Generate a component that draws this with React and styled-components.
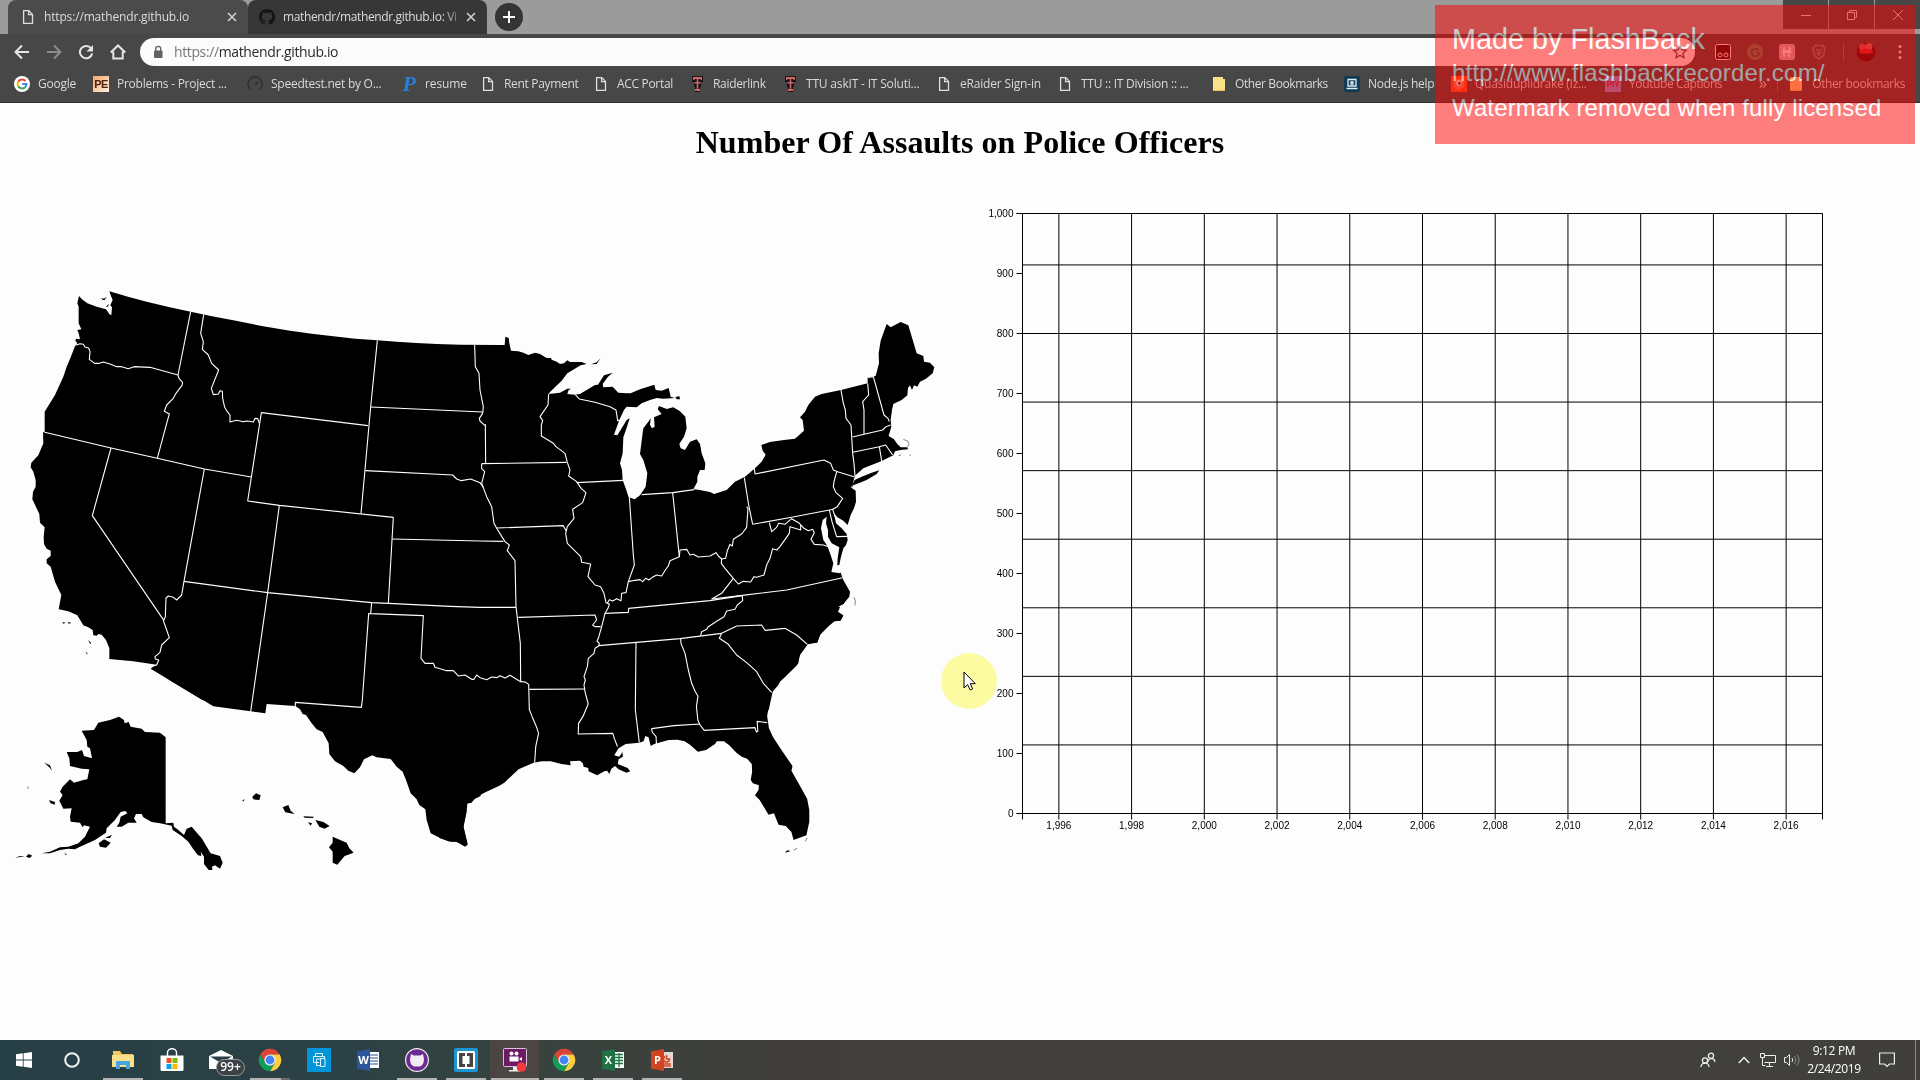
import React from "react";
import styled, { createGlobalStyle } from "styled-components";

const UI = '"Open Sans", "Noto Sans", sans-serif';
const ARIAL = '"Liberation Sans", Arial, sans-serif';

const Global = createGlobalStyle`
  * { box-sizing: border-box; }
  html, body { margin: 0; padding: 0; background: #fdfdfd; overflow: hidden; }
`;

const Screen = styled.div`
  position: relative;
  width: 1920px;
  height: 1080px;
  display: flex;
  flex-direction: column;
  overflow: hidden;
  font-family: ${UI};
`;

/* ---------- browser chrome ---------- */

const TabStrip = styled.div`
  height: 34px;
  flex: none;
  display: flex;
  align-items: flex-start;
  padding-left: 8px;
  background: #9b9b9b;
`;
const Tab = styled.div`
  width: ${(p) => p.$w}px;
  height: 34px;
  display: flex;
  align-items: center;
  padding: 0 11px 0 ${(p) => (p.$active ? 12 : 11)}px;
  border-radius: 8px 8px 0 0;
  background: ${(p) => (p.$active ? "#4b4b4b" : "#373737")};
  color: #dcdcdc;
`;
const TabTitle = styled.span`
  flex: 1;
  margin-left: ${(p) => p.$gap}px;
  overflow: hidden;
  white-space: nowrap;
  font-size: 12px;
  line-height: 18px;
  letter-spacing: ${(p) => p.$ls || 0}px;
  mask-image: ${(p) => (p.$fade ? "linear-gradient(90deg, #000 88%, transparent 99%)" : "none")};
`;
const NewTab = styled.div`
  width: 28px;
  height: 28px;
  margin: 3px 0 0 8px;
  border-radius: 50%;
  background: #343434;
  display: grid;
  place-items: center;
`;
const WindowButtons = styled.div`
  margin-left: auto;
  display: flex;
  gap: 1px;
`;
const WindowButton = styled.div`
  width: 45px;
  height: 29px;
  background: #474747;
  display: grid;
  place-items: center;
`;
const Toolbar = styled.div`
  height: 36px;
  flex: none;
  display: flex;
  align-items: center;
  background: #474747;
  padding: 0 12px 0 14px;
`;
const NavIcons = styled.div`
  display: flex;
  gap: 16px;
  margin-right: 14px;
`;
const AddressBar = styled.div`
  width: 1559px;
  height: 28px;
  display: flex;
  align-items: center;
  border-radius: 14px;
  background: #fbfbfb;
  padding: 0 7px 0 11px;
`;
const Url = styled.span`
  flex: 1;
  margin-left: 9px;
  font-size: 14px;
  line-height: 20px;
  letter-spacing: -0.38px;
  color: #2a2a2a;
  em { font-style: normal; color: #777; }
`;
const Extensions = styled.div`
  display: flex;
  align-items: center;
  gap: 16px;
  margin-left: 20px;
`;
const Divider = styled.span`
  width: 1px;
  height: 16px;
  margin-right: ${(p) => p.$pull || 0}px;
  background: #777;
`;
const Bookmarks = styled.div`
  height: 33px;
  flex: none;
  display: flex;
  align-items: center;
  padding: 0 15px 4px 14px;
  background: #474747;
  border-bottom: 1px solid #303030;
`;
const Bookmark = styled.div`
  width: ${(p) => (p.$w ? `${p.$w}px` : "auto")};
  flex: none;
  display: flex;
  align-items: center;
  gap: 8px;
  white-space: nowrap;
  font-size: 12px;
  line-height: 18px;
  letter-spacing: ${(p) => p.$ls}px;
  color: #dadada;
`;
const Overflow = styled.div`
  margin-left: auto;
  display: flex;
  align-items: center;
  color: #dadada;
  gap: 10px;
  font-size: 17px;
  line-height: 18px;
`;
const Chevrons = styled.span`
  padding-bottom: 3px;
`;
const Badge = styled.span`
  width: 16px;
  height: 16px;
  display: grid;
  place-items: center;
  flex: none;
  border-radius: ${(p) => p.$r || 0};
  background: ${(p) => p.$bg};
  color: ${(p) => p.$fg || "#fff"};
  font: ${(p) => p.$font || `bold 9px ${ARIAL}`};
  letter-spacing: -0.5px;
`;

/* ---------- page ---------- */

const Page = styled.main`
  flex: 1;
  background: #fdfdfd;
`;
const Title = styled.h1`
  margin: 0;
  padding-top: 21px;
  height: 87px;
  text-align: center;
  font: bold 32px/37px "Liberation Serif", "Times New Roman", serif;
  letter-spacing: 0.06px;
  color: #000;
`;
const Panels = styled.div`
  display: grid;
  grid-template-columns: 960px 960px;
  height: 810px;
`;
const Plot = styled.svg`
  display: block;
  width: 960px;
  height: 810px;
  overflow: visible;
`;
const Land = styled.path`
  fill: #000;
`;
const Border = styled.path`
  fill: none;
  stroke: #fff;
  stroke-width: 1.1;
  vector-effect: non-scaling-stroke;
  stroke-linejoin: round;
`;
const Coast = styled(Border)`
  stroke: #777;
  stroke-width: 0.9;
`;
const AxisText = styled.text`
  font: 10px ${ARIAL};
  fill: #000;
`;

/* ---------- overlays ---------- */

const Watermark = styled.div`
  position: absolute;
  left: 1435px;
  top: 5px;
  width: 480px;
  height: 139px;
  padding: 15px 17px;
  background: #f00;
  color: #fff;
  opacity: 0.5;
  font-family: ${ARIAL};
  white-space: nowrap;
`;
const MarkLine = styled.div`
  padding-top: ${(p) => p.$drop || 0}px;
  height: 35px;
  font-size: ${(p) => p.$size}px;
  letter-spacing: ${(p) => p.$ls || 0}px;
  line-height: 35px;
`;
const Pointer = styled.svg`
  position: absolute;
  left: 940px;
  top: 652px;
  width: 58px;
  height: 58px;
  mix-blend-mode: multiply;
`;
const Arrow = styled.svg`
  position: absolute;
  left: 963px;
  top: 671px;
  width: 14px;
  height: 22px;
`;

/* ---------- taskbar ---------- */

const Taskbar = styled.div`
  height: 40px;
  flex: none;
  display: flex;
  background: linear-gradient(90deg, #263f45 0, #2c4145 350px, #37433f 520px, #403f3b 760px, #42413c 1300px, #403f3c 100%);
`;
const Task = styled.div`
  width: ${(p) => p.$w || 49}px;
  height: 40px;
  display: grid;
  place-items: center;
  background: ${(p) => (p.$focus ? "#4b4643" : "none")};
  position: relative;
  &::after {
    content: "";
    display: ${(p) => (p.$open ? "block" : "none")};
    position: absolute;
    bottom: 0;
    left: ${(p) => (p.$focus ? 1 : 5)}px;
    right: ${(p) => (p.$focus ? 0 : 4)}px;
    height: 2px;
    background: ${(p) => (p.$stack ? "linear-gradient(90deg,#b4b4b4 31px,#6c6c6c 31px)" : "#b4b4b4")};
  }
`;
const Count = styled.span`
  position: absolute;
  left: 20px;
  top: 19px;
  width: 29px;
  height: 17px;
  border: 1px solid #999;
  border-radius: 9px;
  background: #3a4245;
  color: #fff;
  font-size: 12px;
  font-weight: 600;
  line-height: 14px;
  text-align: center;
`;
const Tray = styled.div`
  margin-left: auto;
  display: flex;
  align-items: center;
  padding-right: 4px;
`;
const TrayItem = styled.div`
  width: ${(p) => p.$w}px;
  display: grid;
  place-items: center;
`;
const Clock = styled.div`
  width: 62px;
  text-align: center;
  color: #fff;
  font-size: 12px;
  line-height: 18px;
  letter-spacing: -0.35px;
  white-space: nowrap;
`;
const ShowDesktop = styled.div`
  width: 1px;
  height: 40px;
  margin-left: 6px;
  background: #8a8a86;
`;

/* ---------- icons ---------- */

const FileIcon = () => (
  <svg width="16" height="16" viewBox="0 0 16 16" fill="none" stroke="#dedede" strokeWidth="1.3">
    <path d="M3.6 1.6h5.2l3.7 3.8v9H3.6zM8.6 1.6v4h3.9" />
  </svg>
);
const CloseIcon = ({ c = "#cfcfcf" }) => (
  <svg width="10" height="10" viewBox="0 0 10 10" stroke={c} strokeWidth="1.6">
    <path d="M1 1l8 8M9 1l-8 8" />
  </svg>
);
const Octocat = ({ size = 16, color = "#151515" }) => (
  <svg width={size} height={size} viewBox="0 0 16 16" fill={color}>
    <path d="M8 0C3.58 0 0 3.58 0 8c0 3.54 2.29 6.53 5.47 7.59.4.07.55-.17.55-.38 0-.19-.01-.82-.01-1.49-2.01.37-2.53-.49-2.69-.94-.09-.23-.48-.94-.82-1.13-.28-.15-.68-.52-.01-.53.63-.01 1.08.58 1.23.82.72 1.21 1.87.87 2.33.66.07-.52.28-.87.51-1.07-1.78-.2-3.64-.89-3.64-3.95 0-.87.31-1.59.82-2.15-.08-.2-.36-1.02.08-2.12 0 0 .67-.21 2.2.82a7.6 7.6 0 0 1 4 0c1.53-1.04 2.2-.82 2.2-.82.44 1.1.16 1.92.08 2.12.51.56.82 1.27.82 2.15 0 3.07-1.87 3.75-3.65 3.95.29.25.54.73.54 1.48 0 1.07-.01 1.93-.01 2.2 0 .21.15.46.55.38A8 8 0 0 0 16 8c0-4.42-3.58-8-8-8z" />
  </svg>
);
const GoogleIcon = () => (
  <svg width="16" height="16" viewBox="0 0 16 16" fill="none" strokeWidth="2">
    <circle cx="8" cy="8" r="8" fill="#fff" />
    <path d="M11.4 5A4.5 4.5 0 0 0 4.3 5.6" stroke="#ea4335" />
    <path d="M4.3 5.6a4.5 4.5 0 0 0 0 4.8" stroke="#fbbc05" />
    <path d="M4.3 10.4a4.5 4.5 0 0 0 6.6 1" stroke="#34a853" />
    <path d="M10.9 11.4A4.4 4.4 0 0 0 12.4 8H8.2" stroke="#4285f4" />
  </svg>
);
const GaugeIcon = () => (
  <svg width="16" height="16" viewBox="0 0 16 16" fill="none" stroke="#2f3133" strokeWidth="1.6">
    <path d="M3.4 13.2a7 7 0 1 1 9.2 0M8 9.5l3-4" />
  </svg>
);
const FolderIcon = () => (
  <svg width="16" height="16" viewBox="0 0 16 16">
    <path d="M2 1h10v2h2v12H2z" fill="#fbe08a" />
    <path d="M2 14h10l2-2v3H2z" fill="#f0c75e" />
  </svg>
);
const DoubleTIcon = () => (
  <svg width="16" height="16" viewBox="0 0 16 16">
    <path d="M3 0h11v6h-2v5h-1v5H6v-5H5V6H3z" fill="#1c1516" />
    <path d="M4 1h9v3h-1.500V3H9.300v10H11v2H6v-2h1.700V3H5.500v1H4zM5.500 6h6v1.500h-6z" fill="#c9686a" />
  </svg>
);
const LaptopIcon = () => (
  <svg width="16" height="16" viewBox="0 0 16 16">
    <rect width="16" height="16" rx="2" fill="#123a52" />
    <path d="M4 3.500h8v6.500H4zM2.500 12.500h11M7 6h2v2H7z" fill="none" stroke="#d8eef8" strokeWidth="1.3" />
  </svg>
);
const PortraitIcon = () => (
  <svg width="16" height="16" viewBox="0 0 16 16">
    <rect width="16" height="16" fill="#ff5a1e" />
    <circle cx="8" cy="8" r="5.500" fill="#e88a60" />
    <circle cx="8" cy="7" r="3" fill="#f4e8dc" />
    <circle cx="8.500" cy="7.300" r="1.400" fill="#402040" />
  </svg>
);
const ChromeIcon = () => (
  <svg width="24" height="24" viewBox="0 0 24 24">
    <path d="M2.300 6.400A11.200 11.200 0 0 1 21.700 6.400L12 6.400L7.100 14.800Z" fill="#db4437" />
    <path d="M21.700 6.400A11.200 11.200 0 0 1 12 23.200L16.900 14.800L12 6.400Z" fill="#ffcd40" />
    <path d="M12 23.200A11.200 11.200 0 0 1 2.300 6.400L7.100 14.800L16.900 14.800Z" fill="#0f9d58" />
    <circle cx="12" cy="12" r="5.600" fill="#f1f1f1" />
    <circle cx="12" cy="12" r="4.400" fill="#4285f4" />
  </svg>
);
const OfficeIcon = ({ color, letter, kind }) => (
  <svg width="24" height="24" viewBox="0 0 24 24">
    <rect x="12" y="4" width="11" height="16" fill={kind === "ppt" ? "#e8d8d2" : "#fff"} />
    {kind === "doc" && <path d="M14 7h8M14 10h8M14 13h8M14 16h8" stroke={color} strokeWidth="1.200" />}
    {kind === "xls" && <path d="M14 6.500h8M14 9.500h8M14 12.500h8M14 15.500h8M18 5v14" stroke={color} strokeWidth="1.300" />}
    {kind === "ppt" && <path d="M14 16h7M14 18h7M15 8.500a3 3 0 1 0 4.500 2.500h-3V7" fill="none" stroke={color} strokeWidth="1.500" />}
    <path d="M1 3.200L14 1v22L1 20.800z" fill={color} />
    <text x="7.500" y="16" textAnchor="middle" fontFamily="Open Sans" fontWeight="700" fontSize="11" fill="#fff">{letter}</text>
  </svg>
);

/* ---------- map geometry: each sheet has its own origin and scale ---------- */

const SHEETS = {
  west: "translate(0 80) scale(.33333)",
  east: "translate(480 120) scale(.33333)",
  southwest: "translate(0 490) scale(.33333)",
  gulf: "translate(440 410) scale(.35714 .33333)",
};

const LAND = {
  west: [
    "237,78 246,88 262,100 290,110 318,118 328,132 334,136 336,112 331,106 338,90 333,78 328,64 384,80 440,95 506,111 572,125 636,139 700,151 785,168 870,182 935,191 1000,199 1066,206 1132,211 1190,215 1250,219 1310,222 1380,224 1500,225 1500,1290 607,1290 452,1196 462,1188 470,1184 400,1174 328,1167 328,1135 318,1110 305,1094 295,1092 290,1097 280,1096 278,1080 265,1072 250,1066 232,1036 205,1024 176,1018 184,975 165,935 152,890 140,880 140,868 152,858 152,842 140,836 132,822 131,800 134,772 120,758 118,732 97,688 99,665 107,650 107,630 100,605 92,592 94,578 115,556 130,520 129,487 134,487 134,425 165,375 190,320 200,290 212,262 226,226 232,220 226,212 228,206 240,208 236,190 232,180 244,178 236,160 236,110 232,100",
    "304,84 312,86 320,80 314,90 308,90", "318,110 326,102 324,110",
    "187,1056 197,1058 190,1061", "203,1055 214,1059 206,1061", "264,1110 273,1118 271,1123", "257,1144 263,1152 260,1153",
  ],
  east: [
    "0,105 74,105 76,80 86,84 88,100 93,122 115,124 130,128 145,135 165,128 180,132 200,144 213,144 215,149 230,155 240,162 252,160 262,151 270,156 305,156 320,162 302,166 262,190 245,212 210,246 206,252 240,248 262,236 274,236 266,240 262,252 284,254 300,252 345,225 354,224 372,196 398,188 384,200 368,222 370,232 398,230 415,248 440,250 452,250 480,238 523,224 527,240 545,242 566,234 572,260 584,264 550,266 530,264 510,270 485,280 470,292 440,290 432,300 418,330 402,374 412,376 440,330 449,325 441,350 430,382 428,430 420,460 426,480 428,510 437,535 446,562 464,568 480,556 497,530 502,490 490,450 480,432 486,385 490,355 505,335 512,325 510,345 516,355 524,350 522,322 545,312 533,298 537,288 560,297 580,292 600,304 616,320 620,355 612,380 598,402 602,415 615,420 630,395 650,388 660,402 665,430 676,460 674,480 660,480 652,500 652,515 640,538 655,539 690,546 702,552 740,540 765,515 795,500 825,475 845,455 857,434 848,422 844,405 870,396 912,390 945,386 972,362 968,330 960,322 975,305 985,285 1005,260 1025,252 1083,240 1163,220 1163,202 1187,198 1197,160 1196,130 1202,92 1220,42 1232,52 1262,36 1285,46 1310,130 1330,138 1332,155 1350,158 1363,172 1358,190 1338,206 1320,215 1312,230 1302,226 1296,240 1290,226 1284,234 1282,256 1265,270 1240,282 1236,300 1232,330 1234,350 1226,378 1242,388 1252,402 1262,412 1282,412 1284,418 1262,420 1245,424 1240,436 1205,453 1150,475 1124,498 1118,524 1112,532 1127,542 1128,575 1122,595 1112,615 1103,645 1090,632 1072,622 1062,610 1068,640 1085,655 1100,672 1103,690 1098,705 1090,715 1082,745 1078,765 1072,765 1074,786 1082,788 1090,810 1110,845 1108,860 1090,882 1070,886 1080,892 1074,905 1090,916 1082,932 1060,934 1020,975 1012,998 980,1002 960,1030 955,1060 930,1085 900,1115 895,1125 878,1145 866,1200 0,1200",
    "1124,510 1145,500 1175,488 1198,481 1190,492 1160,510 1120,526 1112,536",
    "333,163 350,157 362,145 350,162", "586,262 598,258 600,268 590,268",
    "1256,437 1264,432 1258,439",
  ],
  southwest: [
    "505,-2 640,79 796,100 800,72 886,78 900,88 908,102 918,105 935,130 950,148 968,156 986,190 988,222 1005,244 1030,258 1045,272 1063,280 1080,262 1092,238 1117,226 1130,232 1172,237 1190,260 1208,275 1218,300 1232,340 1250,358 1258,375 1276,388 1280,420 1292,460 1310,469 1345,484 1370,486 1398,498 1403,492 1390,440 1400,395 1398,372 1412,368 1425,356 1442,348 1442,-2",
    "357,110 372,120 374,130 386,126 392,140 425,146 435,156 480,158 497,172 497,430 520,428 522,440 535,450 552,465 560,446 575,440 588,455 605,475 632,520 660,528 668,548 660,566 645,556 636,560 637,570 626,570 612,552 612,530 602,515 604,528 594,526 580,508 565,485 545,468 518,450 515,437 480,430 455,426 430,412 425,402 408,402 402,415 410,428 385,428 365,440 350,440 358,428 362,410 382,400 376,393 362,396 345,420 320,445 318,458 285,480 240,500 225,508 205,506 180,510 150,520 125,520 150,515 180,502 205,500 235,490 255,470 270,440 252,436 248,442 240,428 212,425 210,410 215,385 190,386 178,362 188,345 180,335 188,320 210,298 222,308 250,300 262,298 268,268 245,266 210,258 208,235 200,216 232,216 246,210 252,228 276,235 270,205 262,200 260,180 245,152 282,150 295,128 330,120",
    "133,248 150,256 156,272 148,262", "147,360 165,366 164,374 152,370", "296,490 312,478 332,488 318,503 300,500", "315,474 336,464 330,474",
    "45,534 60,528 75,530 60,531", "78,530 86,522 97,527 88,534", "193,520 200,522 198,526", "82,318 86,325 84,326",
    "757,350 768,340 782,346 778,360 760,358", "726,363 734,357 731,364", "848,382 865,375 872,392 884,402 856,397", "910,409 942,410 938,414 914,413", "924,427 936,430 932,437", "946,420 970,426 989,438 974,446 958,440", "998,470 1040,488 1048,505 1061,518 1034,528 1012,554 998,548 998,515 987,502 998,488",
  ],
  gulf: [
    "-2,0 -2,714 30,725 45,724 70,740 77,734 66,680 76,620 76,610 88,608 100,592 130,575 165,558 180,548 220,508 262,488 285,484 310,484 340,492 366,496 364,484 392,482 400,490 402,500 415,504 416,514 440,526 460,514 468,512 474,522 480,506 490,498 500,508 522,518 533,514 525,504 498,492 500,478 512,470 511,456 502,470 488,466 500,445 520,432 558,428 570,424 575,408 584,412 590,438 600,432 640,420 665,419 685,424 700,434 722,455 745,450 770,432 775,424 795,424 810,436 830,458 845,470 860,476 873,492 874,515 870,540 876,550 893,556 892,570 882,586 895,600 920,644 935,640 948,674 968,678 984,696 990,720 1026,706 1034,665 1034,630 1028,596 1005,552 984,512 987,498 972,475 950,440 932,410 921,385 916,348 924,300 932,270 950,245 965,232 1000,195 1008,165 1030,133 1056,126 1066,100 1085,80 1105,64 1122,60 1128,48 1112,45 1115,20 1130,12 1136,-4 1100,-4",
    "966,758 972,751 982,753",
  ],
};

const WATER = {
  east: ["1040,620 1028,630 1023,655 1030,690 1042,708 1052,735 1060,760 1054,786 1080,790 1072,765 1073,745 1078,712 1055,700 1044,680 1044,660 1038,640"],
  gulf: ["368,486 384,485 378,490", "876,556 890,560 878,580"],
};

const BORDERS = {
  west: [
    "572,125 534,315", "226,226 240,221 250,223 255,231 266,234 270,245 268,268 284,280 298,280 310,276 330,282 350,290 365,290 385,296 402,290 450,292 534,315",
    "534,315 537,325 548,338 546,346 528,370 520,385 500,405 493,424 508,432 500,460 472,565", "134,487 333,534 472,565 613,597 754,621",
    "611,133 602,190 610,215 607,238 625,255 635,280 656,300 634,355 640,374 655,372 660,362 667,364 668,385 674,412 682,425 690,435 690,456 710,451 730,455 742,453 760,456 765,445 773,446 778,460",
    "743,693 784,428 1104,467", "743,693 838,706 1180,742", "1132,211 1112,411 1083,731", "333,534 277,737 492,1052",
    "613,597 552,934 545,975 530,990 520,982 505,978 498,984 496,1040 490,1052", "490,1052 500,1080 508,1103 485,1125 480,1147 465,1160 466,1167 476,1170 470,1185 452,1190",
    "838,706 803,968 757,1290", "552,934 803,968 1115,998 1165,1000 1350,1009 1440,1012", "1180,742 1165,1000", "1177,807 1440,813", "1112,411 1448,426",
    "1424,225 1426,290 1437,310 1440,360 1450,410 1448,430 1438,445 1440,453 1455,467", "1096,602 1358,615 1370,627 1384,632 1412,627 1440,638 1450,652",
    "1115,998 1112,1031 1270,1037 1263,1165 1275,1180 1300,1180 1305,1192 1340,1202 1360,1202 1375,1218 1395,1215 1415,1228 1422,1228 1430,1215 1440,1223", "1112,1031 1106,1031 1087,1290",
  ],
  southwest: ["757,60 752,95", "1087,60 1084,82 886,67 886,80"],
  east: [
    "16,342 17,460", "5,461 260,457",
    "5,461 5,476 14,485 5,520 20,560 35,590 42,640 50,655 75,695 88,705 82,722 105,752 108,890 115,950 121,1000 122,1115",
    "50,654 250,647 258,662", "0,693 70,694", "0,892 108,892", "206,252 204,285 180,320 188,332 184,345 184,378 220,400 228,410 255,430 262,457",
    "262,457 270,480 266,498 290,515 304,536 318,548 308,578 278,598 282,625 262,650 257,670 262,700 302,740 305,757 332,762 324,800 345,825 362,830 372,850 378,878 388,882 384,895 375,910 365,950 355,985 351,993 358,1000 356,1008",
    "290,518 430,511", "286,254 298,267 345,277 390,290 408,300 413,332 425,330", "448,562 460,735 463,765 445,815 438,848 425,850 423,872 410,866 398,873 388,869 382,880",
    "485,554 578,548 642,539", "578,548 598,740",
    "445,815 465,811 480,809 488,815 497,805 507,810 517,802 530,795 545,798 556,780 565,768 570,752 598,740 600,720 620,718 630,735 640,733 655,741 690,738 708,728 715,738 725,747 737,745 742,722 750,703 757,708 760,688 785,672 800,652 804,595 800,590",
    "793,503 806,585 818,643", "818,643 935,622 1060,598", "823,475 825,492 1032,450 1052,460 1060,480 1075,486 1122,500",
    "1070,486 1062,515 1060,530 1068,548 1088,565 1072,590 1058,598 1065,620", "1048,600 1056,635 1070,680 1102,679",
    "868,638 875,665 890,652 896,640 915,643 935,626 958,640 972,655 985,662 998,658 1003,668 993,688 1003,703 1030,705 1045,710",
    "962,645 962,660 930,650 928,670 900,710 890,720 878,716 870,745 860,765 852,795 830,802 822,800 812,816 790,814 775,822 760,805", "725,745 724,760 735,775 760,805",
    "760,805 725,850 695,867", "695,867 787,856 920,840 1088,803", "375,910 445,907 446,895 690,872 787,857",
    "787,857 788,872 772,885 765,898 740,903 732,920 710,934 685,950 680,958 665,965 662,977", "356,1007 600,986 725,970", "725,970 770,948 845,945 855,961 915,955 950,975 982,1003",
    "725,970 718,985 745,1003 750,1010 770,1035 800,1058 830,1085 850,1120 875,1147", "468,998 466,1200", "602,986 603,1000 615,1030 625,1080 635,1120 646,1145 655,1160",
    "115,922 345,915 350,930 338,945 345,950 362,950", "356,1008 345,1015 342,1030 325,1045 322,1070 312,1100 316,1110 312,1125 314,1137", "148,1138 314,1137",
    "0,1103 20,1109 35,1101 50,1103 60,1097 75,1104 90,1096 122,1115 136,1116 146,1123 148,1200",
    "1083,240 1090,280 1096,300 1098,325 1113,345 1118,430 1122,460 1125,498", "1163,220 1166,255 1148,275 1152,300 1152,373", "1163,202 1180,200 1212,315 1224,325 1228,335",
    "1118,381 1152,373 1208,360 1218,350 1232,345", "1118,427 1198,410 1217,405 1238,435", "1198,410 1205,453",
  ],
  gulf: [
    "405,267 406,275 415,312 400,350 388,370 387,402 484,400 488,415 497,440", "250,328 258,350 270,380 276,400 268,440 265,488",
    "547,330 558,428", "722,290 718,320 722,360 728,375", "728,372 655,377 593,386 594,396 605,410 606,432", "728,375 740,391 882,383 886,396 890,394 888,364 916,368",
  ],
};

const COASTS = {
  east: ["1280,412 1287,404 1284,394 1270,388", "1122,862 1126,872 1125,886", "1288,436 1293,435"],
  gulf: ["990,750 1000,745", "1022,724 1028,714"],
};

const toPath = (points, closed) => "M" + points.split(" ").join("L") + (closed ? "Z" : "");

const UsMap = () => (
  <Plot viewBox="0 0 960 810">
    {Object.keys(SHEETS).map((k) => (
      <g key={k} transform={SHEETS[k]}>
        {LAND[k].map((d) => <Land key={d} d={toPath(d, true)} />)}
      </g>
    ))}
    {Object.keys(SHEETS).map((k) => (
      <g key={k} transform={SHEETS[k]}>
        {(WATER[k] || []).map((d) => <path key={d} d={toPath(d, true)} fill="#fdfdfd" />)}
        {BORDERS[k].map((d) => <Border key={d} d={toPath(d)} />)}
        {(COASTS[k] || []).map((d) => <Coast key={d} d={toPath(d)} />)}
      </g>
    ))}
  </Plot>
);

const CHART = { left: 62.5, top: 23.5, width: 800, height: 600 };
const YEARS = Array.from({ length: 11 }, (_, i) => 1996 + i * 2);
const COUNTS = Array.from({ length: 11 }, (_, i) => i * 100);

const Chart = () => {
  const { left, top, width, height } = CHART;
  const right = left + width;
  const bottom = top + height;
  const x = (year) => left + ((year - 1995) / 22) * width;
  const y = (n) => bottom - (n / 1000) * height;
  return (
    <Plot viewBox="0 0 960 810">
      <g stroke="#000" fill="none">
        <path d={`M${left - 6} ${top}H${right}V${bottom + 6}M${left - 6} ${bottom}H${right}M${left} ${top}V${bottom + 6}`} />
        {YEARS.map((v) => <path key={v} d={`M${x(v)} ${top}V${bottom + 6}`} />)}
        {COUNTS.map((v) => <path key={v} d={`M${left - 6} ${Math.floor(y(v)) + 0.5}H${left}`} />)}
        {[1, 2, 3, 4, 5, 6, 7, 8].map((k) => <path key={k} d={`M${left} ${bottom - (k * height) / 8.75}H${right}`} />)}
      </g>
      {YEARS.map((v) => <AxisText key={v} x={x(v)} y={bottom + 15.6} textAnchor="middle">{v.toLocaleString("en-US")}</AxisText>)}
      {COUNTS.map((v) => <AxisText key={v} x={left - 9} y={y(v) + 3.2} textAnchor="end">{v.toLocaleString("en-US")}</AxisText>)}
    </Plot>
  );
};

const BOOKMARKS = [
  { w: 79, label: "Google", icon: <GoogleIcon /> },
  { w: 154, label: "Problems - Project ...", icon: <Badge $bg="linear-gradient(135deg,#f3a86a,#fff0e0)" $fg="#4a2410" $font={`bold 11px ${ARIAL}`}>PE</Badge> },
  { w: 154, label: "Speedtest.net by O...", icon: <GaugeIcon /> },
  { w: 79, label: "resume", icon: <Badge $bg="none" $fg="#2680dc" $font='italic bold 22px/16px "Liberation Serif", serif'>P</Badge>, ls: -0.1 },
  { w: 113, label: "Rent Payment", icon: <FileIcon />, ls: -0.32 },
  { w: 96, label: "ACC Portal", icon: <FileIcon />, ls: -0.32 },
  { w: 93, label: "Raiderlink", icon: <DoubleTIcon />, ls: -0.32 },
  { w: 154, label: "TTU askIT - IT Soluti...", icon: <DoubleTIcon />, ls: -0.18 },
  { w: 121, label: "eRaider Sign-in", icon: <FileIcon />, ls: -0.18 },
  { w: 154, label: "TTU :: IT Division :: ...", icon: <FileIcon /> },
  { w: 133, label: "Other Bookmarks", icon: <FolderIcon />, ls: -0.4 },
  { w: 107, label: "Node.js help", icon: <LaptopIcon />, ls: -0.3 },
  { w: 154, label: "Quasiduplidrake (Iz...", icon: <PortraitIcon /> },
  { w: 118, label: "Youtube Captions", icon: <Badge $bg="#7a9ad8" $fg="#c01840">PIY</Badge>, ls: -0.38 },
];

const Browser = () => (
  <>
    <TabStrip>
      <Tab $w={240} $active>
        <FileIcon />
        <TabTitle $gap={8} $ls={-0.16}>https://mathendr.github.io</TabTitle>
        <CloseIcon />
      </Tab>
      <Tab $w={239}>
        <Octocat />
        <TabTitle $gap={8} $ls={-0.36} $fade>mathendr/mathendr.github.io: Vi</TabTitle>
        <CloseIcon />
      </Tab>
      <NewTab>
        <svg width="12" height="12" stroke="#fff" strokeWidth="2"><path d="M6 0v12M0 6h12" /></svg>
      </NewTab>
      <WindowButtons>
        <WindowButton><svg width="10" height="10" stroke="#ddd"><path d="M0 5.500h10" /></svg></WindowButton>
        <WindowButton><svg width="10" height="10" stroke="#ddd" fill="none"><path d="M.5 2.500h7v7h-7zM2.500 2.500v-2h7v7h-2" /></svg></WindowButton>
        <WindowButton><svg width="10" height="10" stroke="#ddd"><path d="M0 0l10 10M10 0L0 10" /></svg></WindowButton>
      </WindowButtons>
    </TabStrip>
    <Toolbar>
      <NavIcons>
        <svg width="16" height="16" fill="none" stroke="#e6e6e6" strokeWidth="2"><path d="M15 8H2M8 1.500L1.500 8L8 14.500" /></svg>
        <svg width="16" height="16" fill="none" stroke="#8c8c8c" strokeWidth="2"><path d="M1 8h13M8 1.500L14.500 8L8 14.500" /></svg>
        <svg width="16" height="16" fill="none" stroke="#e6e6e6" strokeWidth="2"><path d="M13.200 4.500A6.200 6.200 0 1 0 14.200 9.500" /><path d="M15 1v6.500H8.500z" fill="#e6e6e6" stroke="none" /></svg>
        <svg width="16" height="16" fill="none" stroke="#e6e6e6" strokeWidth="2"><path d="M0.800 8.500L8 1.500L15.200 8.500M3.300 7.500v7h9.400v-7" /></svg>
      </NavIcons>
      <AddressBar>
        <svg width="14" height="14" viewBox="0 0 14 14"><rect x="3" y="5.500" width="8.500" height="7.500" rx="1" fill="#5f6368" /><path d="M4.800 6V3.800a2.450 2.450 0 0 1 4.900 0V6" fill="none" stroke="#5f6368" strokeWidth="1.400" /></svg>
        <Url><em>https://</em>mathendr.github.io</Url>
        <svg width="16" height="16" viewBox="0 0 16 16" fill="none" stroke="#555" strokeWidth="1.400"><path d="M8 1.800l1.900 4 4.400.5-3.300 3 .9 4.300L8 11.400l-3.900 2.200.9-4.300-3.300-3 4.400-.5z" /></svg>
      </AddressBar>
      <Extensions>
        <svg width="16" height="16" fill="#2b0f0f" stroke="#f4f4f4"><rect x=".5" y=".5" width="15" height="15" rx="2" /><circle cx="5" cy="11" r="2" /><circle cx="11" cy="11" r="2" /></svg>
        <Badge $bg="#5f7f5f" $fg="#33503c" $r="50%" $font={`bold 13px ${ARIAL}`}>G</Badge>
        <svg width="16" height="16"><rect width="16" height="16" rx="3" fill="#c9b0b0" /><path d="M5 3v10M11 3v3L5 8M10 8v5M3 8h10" stroke="#fff" strokeWidth="1.600" fill="none" /></svg>
        <svg width="16" height="16" fill="none" stroke="#85787a" strokeWidth="1.500"><path d="M4 1.500h8l2 3-1.500 7L8 15l-4.500-3.500L2 4.500zM5 5l3 2 3-2M6 8l2 3 2-3" /></svg>
        <Divider $pull={-4} />
        <svg width="20" height="20"><circle cx="10" cy="10" r="9.500" fill="#3d0f10" /><circle cx="6.500" cy="5" r="3.500" fill="#b9595c" /><circle cx="13" cy="4.500" r="3.500" fill="#c9696c" /><path d="M2 9.500q8-6 16 0l-3 2H5z" fill="#c02c30" /></svg>
        <svg width="16" height="16" fill="#e6e6e6"><circle cx="8" cy="2.500" r="1.600" /><circle cx="8" cy="8" r="1.600" /><circle cx="8" cy="13.500" r="1.600" /></svg>
      </Extensions>
    </Toolbar>
    <Bookmarks>
      {BOOKMARKS.map((b) => (
        <Bookmark key={b.label} $w={b.w} $ls={b.ls ?? -0.25}>{b.icon}<span>{b.label}</span></Bookmark>
      ))}
      <Overflow>
        <Chevrons>»</Chevrons>
        <Divider />
        <Bookmark $ls={-0.38}><FolderIcon /><span>Other bookmarks</span></Bookmark>
      </Overflow>
    </Bookmarks>
  </>
);

const Bar = () => (
  <Taskbar>
    <Task $w={48}><svg width="16" height="16" fill="#fff"><path d="M0 2.300l6.800-1v6.300H0zM7.600 1.200L16 0v7.600H7.600zM0 8.400h6.800v6.300L0 13.700zM7.600 8.400H16V16l-8.400-1.200z" /></svg></Task>
    <Task $w={50}><svg width="18" height="16"><circle cx="8" cy="8" r="6.800" fill="none" stroke="#f4f4f4" strokeWidth="2" /></svg></Task>
    <Task $open>
      <svg width="22" height="18"><path d="M1 0h7l2 3h11v13H1z" fill="#f2c75c" /><path d="M0 4h22v12H0z" fill="#fbe08c" /><path d="M4 10h14v8h-4v-4H8v4H4z" fill="#45a6e4" /></svg>
    </Task>
    <Task>
      <svg width="24" height="24"><path d="M0.500 7.500h23v14a1.500 1.500 0 0 1-1.500 1.500H2a1.500 1.500 0 0 1-1.500-1.500z" fill="#fff" /><path d="M7.500 8V4.500a4.500 3.700 0 0 1 9 0V8" fill="none" stroke="#fff" strokeWidth="1.400" /><path d="M6.500 10h5v5h-5z" fill="#f25022" /><path d="M12.500 10h5v5h-5z" fill="#7fba00" /><path d="M6.500 16h5v5h-5z" fill="#00a4ef" /><path d="M12.500 16h5v5h-5z" fill="#ffb900" /></svg>
    </Task>
    <Task>
      <svg width="24" height="20"><path d="M0 6L12 0l12 6v13H0z" fill="#fff" /><path d="M1 6.500h22L12 13z" fill="#263f45" /></svg>
      <Count>99+</Count>
    </Task>
    <Task $open $stack><ChromeIcon /></Task>
    <Task>
      <svg width="24" height="24" fill="none" stroke="#e4f4fc"><rect width="24" height="24" fill="#0095d9" stroke="none" /><path d="M8.500 8V5.500h7V8M12 14.500H6.500V8.500h11v2M9.500 11h4M13.500 10.500h4.500v8h-4.500zM9.500 11v6.500h4" /></svg>
    </Task>
    <Task><OfficeIcon color="#2b579a" letter="W" kind="doc" /></Task>
    <Task $open>
      <svg width="24" height="24"><circle cx="12" cy="12" r="11.400" fill="#6e2a94" stroke="#eee" strokeWidth="1.200" /><path d="M6 6l3 1.500h6L18 6l.8 4c.6 4-1 7.500-3.800 8.500H9c-2.800-1-4.400-4.500-3.800-8.500z" fill="#f2ecf5" /></svg>
    </Task>
    <Task $open>
      <svg width="24" height="24"><rect width="24" height="24" rx="2" fill="#1c96d2" /><rect x="3" y="3" width="18" height="18" rx="1.500" fill="#fff" /><path d="M5 5h6v3H8.500v8H11v3H5zM19 5h-6v3h2.500v8H13v3h6z" fill="#444" /></svg>
    </Task>
    <Task $open $focus>
      <svg width="24" height="24"><rect x=".5" y=".5" width="23" height="18" rx="1" fill="#6b1a63" stroke="#d9c4d6" /><path d="M10 19h4v3h3v1.500H6V22h4z" fill="#eee" /><circle cx="8.500" cy="5.500" r="2" fill="#fff" /><circle cx="13.500" cy="5.500" r="2" fill="#fff" /><path d="M6.500 8.500h9v5h-9zM16 11l3-2v4z" fill="#fff" /><circle cx="18.500" cy="19" r="4.800" fill="#f23b3b" /></svg>
    </Task>
    <Task $open><ChromeIcon /></Task>
    <Task $open><OfficeIcon color="#1f7244" letter="X" kind="xls" /></Task>
    <Task $open><OfficeIcon color="#d04424" letter="P" kind="ppt" /></Task>
    <Tray>
      <TrayItem $w={50}>
        <svg width="16" height="16" fill="none" stroke="#eee" strokeWidth="1.300"><circle cx="11" cy="3.800" r="2.600" /><path d="M8 10a3.400 3.400 0 0 1 6.800 0" /><circle cx="5" cy="8.500" r="2.600" /><path d="M1 15a4 4 0 0 1 8 0" /></svg>
      </TrayItem>
      <TrayItem $w={22}><svg width="12" height="8" fill="none" stroke="#eee" strokeWidth="1.500"><path d="M.8 7L6 1.500L11.200 7" /></svg></TrayItem>
      <TrayItem $w={26}>
        <svg width="16" height="14" fill="none" stroke="#eee"><path d="M4.500 2.500h11v7h-11M.5.500h4v4h-4zM2.500 4.500v8h3M9.500 10v3M6 13.500h7" /></svg>
      </TrayItem>
      <TrayItem $w={22}>
        <svg width="16" height="14" fill="none" stroke="#eee"><path d="M.5 4.500h2l3-3v11l-3-3h-2zM8 5q1.500 2 0 4" /><path d="M10.500 3q3 4 0 8M13 1.500q4 5.500 0 11" stroke="#8a8a86" /></svg>
      </TrayItem>
      <Clock>9:12 PM<br />2/24/2019</Clock>
      <TrayItem $w={44}>
        <svg width="16" height="16" fill="none" stroke="#eee" strokeWidth="1.200"><path d="M.6 1h14.800v11h-5l-2.400 2.500L5.600 12h-5z" /></svg>
      </TrayItem>
      <ShowDesktop />
    </Tray>
  </Taskbar>
);

export default function App() {
  return (
    <Screen>
      <Global />
      <Browser />
      <Page>
        <Title>Number Of Assaults on Police Officers</Title>
        <Panels>
          <UsMap />
          <Chart />
        </Panels>
      </Page>
      <Bar />
      <Pointer><circle cx="29" cy="29" r="28" fill="#fffda3" /></Pointer>
      <Arrow viewBox="0 0 14 22"><path d="M1 1v16l3.700-3.400L7.200 19l2.400-1.100-2.300-5.200h5z" fill="#fff" stroke="#000" /></Arrow>
      <Watermark>
        <MarkLine $size={28.8} $drop={2}>Made by FlashBack</MarkLine>
        <MarkLine $size={24} $ls={0.22}>http://www.flashbackrecorder.com/</MarkLine>
        <MarkLine $size={24} $ls={0.13}>Watermark removed when fully licensed</MarkLine>
      </Watermark>
    </Screen>
  );
}
